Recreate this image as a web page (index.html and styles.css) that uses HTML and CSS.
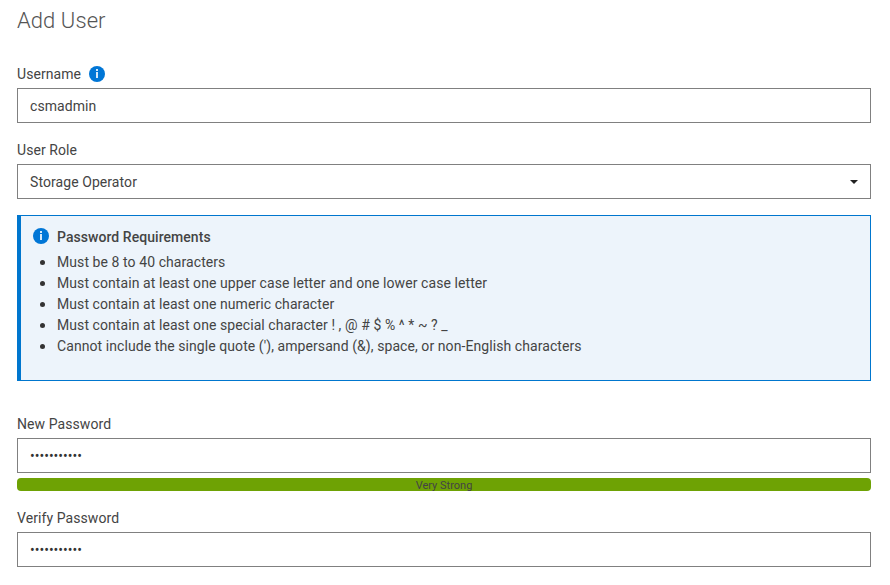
FILE: index.html
```html
<!DOCTYPE html>
<html lang="en">
<head>
<meta charset="utf-8">
<title>Add User</title>
<link rel="stylesheet" href="styles.css">
</head>
<body>
<main class="form">
  <h1 class="title">Add User</h1>
  <div class="label label-info">Username
    <svg class="info" viewBox="0 0 16 16"><circle cx="8" cy="8" r="8"/><rect x="7" y="6" width="2" height="6"/><rect x="7" y="3" width="2" height="2"/></svg>
  </div>
  <div class="field">csmadmin</div>
  <div class="label label-role">User Role</div>
  <div class="field select">Storage Operator
    <svg class="caret" viewBox="0 0 8 4"><path d="M0 0h8L4 4z"/></svg>
  </div>
  <section class="notice">
    <div class="notice-head">
      <svg class="info" viewBox="0 0 16 16"><circle cx="8" cy="8" r="8"/><rect x="7" y="6" width="2" height="6"/><rect x="7" y="3" width="2" height="2"/></svg>
      <span class="notice-title">Password Requirements</span>
    </div>
    <ul class="rules">
      <li>Must be 8 to 40 characters</li>
      <li>Must contain at least one upper case letter and one lower case letter</li>
      <li>Must contain at least one numeric character</li>
      <li>Must contain at least one special character ! , @ # $ % ^ * ~ ? _</li>
      <li>Cannot include the single quote ('), ampersand (&amp;), space, or non-English characters</li>
    </ul>
  </section>
  <div class="label label-new">New Password</div>
  <div class="field secret">•••••••••••</div>
  <div class="strength">Very Strong</div>
  <div class="label label-verify">Verify Password</div>
  <div class="field secret">•••••••••••</div>
</main>
</body>
</html>
```
FILE: styles.css
```css
* { box-sizing: border-box; }
body { margin: 0; background: #fff; color: #444; font: 14px/21px Roboto, sans-serif; letter-spacing: 0.075px; }
.form { padding: 5px 19px 0 17px; }
.title { margin: 0; color: #555; font-size: 22px; font-weight: 300; line-height: 32px; }
.label { height: 21px; margin-bottom: 3px; }
.label-info { display: flex; align-items: center; gap: 8px; margin-top: 27px; }
.info { width: 16px; height: 16px; fill: #0076d6; flex: none; }
.label-info .info { margin-top: -2px; }
.info rect { fill: #d5e9fa; }
.field { height: 35px; border: 1px solid #808080; padding: 0 12px; line-height: 34px; }
.label-role { margin-top: 17px; }
.select { display: flex; align-items: center; justify-content: space-between; }
.caret { width: 8px; height: 4px; fill: #222; }
.notice { height: 166px; margin-top: 16px; padding: 10px 12px; border: 1px solid #0076ce; border-left-width: 4px; background: #edf4fb; }
.notice-head { display: flex; align-items: center; gap: 8px; height: 21px; font-weight: 500; letter-spacing: 0.05px; }
.notice-head .info { margin-top: -1px; }
.notice-title { padding-top: 2px; }
.rules { margin: 5px 0 0; padding: 0 0 0 7px; list-style: none; }
.rules li { display: flex; align-items: center; gap: 12px; white-space: nowrap; }
.rules li::before { content: ""; width: 5px; height: 5px; margin-top: -1px; border-radius: 50%; background: #333; }
.label-new { margin-top: 33px; }
.secret { color: #333; letter-spacing: 0; }
.strength { height: 13px; margin-top: 5px; border-radius: 4px; background: #6ea204; font-size: 11px; line-height: 15px; letter-spacing: 0; text-align: center; }
.label-verify { margin-top: 17px; }
```
